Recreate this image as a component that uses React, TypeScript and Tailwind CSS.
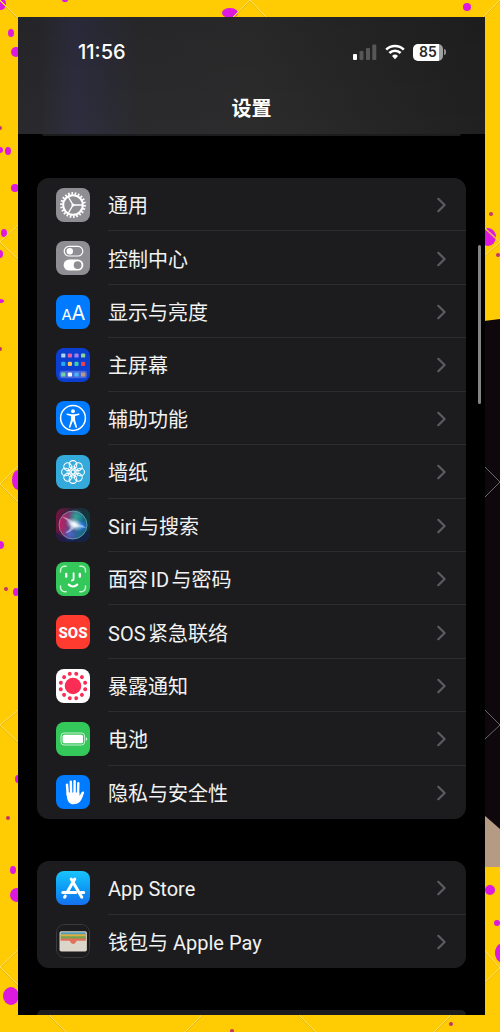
import React from 'react';

interface SettingItem {
  label: string;
  icon: React.ReactNode;
}

const IconTile: React.FC<{ children: React.ReactNode; className: string }> = ({ children, className }) => (
  <span className={`block size-[34px] shrink-0 overflow-hidden rounded-[8px] ${className}`}>
    <svg viewBox="0 0 34 34" className="size-full" aria-hidden="true">
      {children}
    </svg>
  </span>
);

const ring = (count: number, offset = 0) => Array.from({ length: count }, (_, i) => (360 / count) * i + offset);

const GeneralIcon = () => (
  <IconTile className="bg-[#8e8e93]">
    <g stroke="#fff" fill="none">
      <circle cx="17" cy="17" r="11.6" strokeWidth="2.6" pathLength="44" strokeDasharray="1 1" />
      <circle cx="17" cy="17" r="9.8" strokeWidth="2" />
      <path d="M17 17h9M17 17l-4.6-8M17 17l-4.6 8" strokeWidth="1.4" />
    </g>
    <circle cx="17" cy="17" r="1.6" fill="#fff" />
  </IconTile>
);

const ControlCenterIcon = () => (
  <IconTile className="bg-[#8e8e93]">
    <rect x="8.2" y="5.4" width="18.6" height="9.6" rx="4.8" fill="none" stroke="#fff" strokeWidth="1.2" />
    <circle cx="13.8" cy="10.2" r="3.2" fill="#fff" />
    <rect x="7.6" y="18.6" width="19.8" height="11" rx="5.5" fill="#fff" />
    <circle cx="21.6" cy="24.1" r="3.9" fill="#8e8e93" />
  </IconTile>
);

const DisplayIcon = () => (
  <IconTile className="bg-[#007aff]">
    <g fill="#fff" fontFamily="Inter, sans-serif" fontWeight="400">
      <text x="5.5" y="24.5" fontSize="15">A</text>
      <text x="15.5" y="24.5" fontSize="20">A</text>
    </g>
  </IconTile>
);

const HOME_APPS = [
  { y: 5.4, colors: ['#a9d4f0', '#ea5c9c', '#a67cf0', '#93d392'] },
  { y: 13.7, colors: ['#23a9ee', '#f3c552', '#3dcab9', '#e3434d'] },
  { y: 24.4, colors: ['#6bd6a0', '#f4f4f8', '#46b6f2', '#bb9a85'] },
];

const HomeScreenIcon = () => (
  <IconTile className="bg-[#0b3fd2]">
    <rect x="3.6" y="22.8" width="27.4" height="7.4" rx="2.4" fill="#4a68dd" />
    {HOME_APPS.map(row =>
      row.colors.map((color, i) => (
        <rect key={color} x={5.2 + i * 6.6} y={row.y} width="4.2" height="4.2" rx="1.2" fill={color} />
      ))
    )}
  </IconTile>
);

const AccessibilityIcon = () => (
  <IconTile className="bg-[#007aff]">
    <circle cx="17" cy="17" r="12.4" fill="none" stroke="#fff" strokeWidth="1.5" />
    <circle cx="17" cy="10.2" r="1.9" fill="#fff" />
    <path
      d="M11.2 12.5l4.2.8h3.2l4.2-.8c.9-.1 1.1 1.1.2 1.4l-3.900 1.200v4l1.900 6.600c.3 1-1.100 1.400-1.500.5L17.400 20.400h-.8L14.500 26.200c-.4.9-1.800.5-1.500-.5l1.900-6.600v-4L11 13.900c-.9-.3-.7-1.500.2-1.400z"
      fill="#fff"
    />
  </IconTile>
);

const WallpaperIcon = () => (
  <IconTile className="bg-[#34aadc]">
    <g fill="none" stroke="#fff" strokeWidth="1.1">
      {ring(8).map(angle => (
        <g key={angle} transform={`rotate(${angle} 17 17)`}>
          <circle cx="17" cy="9.4" r="3.8" />
          <ellipse cx="17" cy="13" rx="1.5" ry="2" strokeWidth="0.7" />
        </g>
      ))}
      <circle cx="17" cy="17" r="2" />
    </g>
  </IconTile>
);

const SiriIcon = () => (
  <IconTile className="bg-[#1b1a26]">
    <defs>
      <linearGradient id="siri-bg" x1="0" y1="0" x2="1" y2="0.2">
        <stop offset="0" stopColor="#7c1342" />
        <stop offset="0.5" stopColor="#262338" />
        <stop offset="1" stopColor="#0d3a3c" />
      </linearGradient>
      <linearGradient id="siri-orb" x1="0" y1="0.4" x2="1" y2="0.5">
        <stop offset="0" stopColor="#c8195f" />
        <stop offset="0.4" stopColor="#6b3f78" />
        <stop offset="0.75" stopColor="#1d6f92" />
        <stop offset="1" stopColor="#10606a" />
      </linearGradient>
      <radialGradient id="siri-glow">
        <stop offset="0" stopColor="#fff" />
        <stop offset="0.3" stopColor="#eef8ff" stopOpacity="0.85" />
        <stop offset="1" stopColor="#8fc8e8" stopOpacity="0" />
      </radialGradient>
      <radialGradient id="siri-blue">
        <stop offset="0" stopColor="#2f8bff" />
        <stop offset="1" stopColor="#2f5bff" stopOpacity="0" />
      </radialGradient>
      <radialGradient id="siri-green">
        <stop offset="0" stopColor="#2ac89a" stopOpacity="0.9" />
        <stop offset="1" stopColor="#2ac89a" stopOpacity="0" />
      </radialGradient>
    </defs>
    <rect width="34" height="34" fill="url(#siri-bg)" />
    <path d="M0 24Q16 40 34 20V34H0z" fill="#141b4a" opacity="0.7" />
    <circle cx="17" cy="17" r="14" fill="url(#siri-orb)" />
    <circle cx="20" cy="8.5" r="8" fill="url(#siri-green)" opacity="0.8" />
    <circle cx="14" cy="26" r="8" fill="url(#siri-blue)" opacity="0.6" />
    <circle cx="26" cy="18" r="6" fill="url(#siri-blue)" />
    <path d="M6 9c5 0 10 3 13 7 4 0 8 1 11 4-5-1-8-1-11-1-3 4-6 6-10 6 3-2 5-4 6-7-2-4-5-7-9-9z" fill="#fff" opacity="0.45" />
    <ellipse cx="18.5" cy="16.5" rx="9.5" ry="6.5" fill="url(#siri-glow)" transform="rotate(25 18.5 16.5)" />
    <circle cx="17" cy="17" r="14" fill="none" stroke="#86b8cc" strokeWidth="0.8" opacity="0.8" />
  </IconTile>
);

const FaceIdIcon = () => (
  <IconTile className="bg-[#34c759]">
    <g fill="none" stroke="#fff" strokeLinecap="round">
      <path
        d="M4.500 10V8.500a4.200 4.200 0 0 1 4.200-4.200h1.500M23.800 4.300h1.500a4.200 4.200 0 0 1 4.200 4.200V10M29.500 24v1.500a4.200 4.200 0 0 1-4.200 4.200h-1.500M10.200 29.700H8.700a4.200 4.200 0 0 1-4.200-4.200V24"
        strokeWidth="1.5"
        opacity="0.75"
      />
      <path d="M10.200 12v2.600M23.800 12v2.600" strokeWidth="2.4" />
      <path d="M17.600 11.200v5.900c0 .9-.5 1.400-1.700 1.400" strokeWidth="1.8" />
      <path d="M12.800 22.600c2.400 2.400 6 2.400 8.400 0" strokeWidth="2.200" />
    </g>
  </IconTile>
);

const SosIcon = () => (
  <IconTile className="bg-[#ff3b30]">
    <text x="17" y="22.5" textAnchor="middle" fill="#fff" fontFamily="Roboto, sans-serif" fontWeight="800" fontSize="15">
      SOS
    </text>
  </IconTile>
);

const ExposureIcon = () => (
  <IconTile className="bg-white">
    <g fill="#fb2d55">
      <circle cx="17" cy="17" r="8.3" />
      {ring(12, 15).map(angle => (
        <circle key={angle} cx="17" cy="4.4" r="2" transform={`rotate(${angle} 17 17)`} />
      ))}
    </g>
  </IconTile>
);

const BatteryIcon = () => (
  <IconTile className="bg-[#34c759]">
    <rect x="5" y="11" width="23.6" height="12" rx="3" fill="none" stroke="#fff" strokeWidth="0.9" opacity="0.8" />
    <rect x="6.6" y="12.7" width="20.4" height="8.6" rx="1.6" fill="#fff" />
    <path d="M29.900 15.200c1.800.6 1.800 3 0 3.600z" fill="#fff" opacity="0.8" />
  </IconTile>
);

const PrivacyIcon = () => (
  <IconTile className="bg-[#007aff]">
    <g stroke="#fff" strokeWidth="2.5" strokeLinecap="round">
      <path d="M11 9.800l.8 10M14.800 6.800l.3 12M18.600 6.200v12M22.300 8.300l-.3 12" />
    </g>
    <path
      d="M10.500 17.500h12.800l.2 3.500 2.100-3.700c.8-1.400 2.900-1 2.500.5-1.200 3.600-2.200 6.600-4 8.800-1.500 1.800-3.700 2.700-6.600 2.700-4.800 0-6.600-3.500-7-11.800z"
      fill="#fff"
    />
  </IconTile>
);

const AppStoreIcon = () => (
  <IconTile className="bg-linear-to-b from-[#1bc4fb] to-[#1670ee]">
    <g stroke="#fff" strokeWidth="3" strokeLinecap="round" fill="none">
      <path d="M18.800 8l-7.500 13M15.200 8l10.600 18.200M9.300 25l-.7 1.200" />
      <path d="M6.800 21.600h13M25 21.600h2.700" />
    </g>
  </IconTile>
);

const WalletIcon = () => (
  <IconTile className="bg-[#1c1c1e]">
    <rect x="0.5" y="0.5" width="33" height="33" rx="7.5" fill="none" stroke="#3a3a3c" />
    <rect x="3.5" y="7.200" width="27.400" height="20.400" rx="1.800" fill="#dcd6ca" />
    <path d="M4.600 9.400a1.200 1.200 0 0 1 1.200-1.200h22.800a1.200 1.200 0 0 1 1.200 1.200V12H4.600z" fill="#4f9dbd" />
    <path d="M4.600 10.200h25.200v3H4.600z" fill="#dfae41" />
    <path d="M4.600 12.300h25.200v3H4.600z" fill="#74a351" />
    <path d="M4.600 14.600h25.200v2.100H21.300c-.9 0-1 .6-1.500 1.600-1.100 2.200-4.100 2.200-5.200 0-.5-1-.6-1.600-1.500-1.600H4.600z" fill="#e2705b" />
  </IconTile>
);

const MAIN_ITEMS: SettingItem[] = [
  { label: '通用', icon: <GeneralIcon /> },
  { label: '控制中心', icon: <ControlCenterIcon /> },
  { label: '显示与亮度', icon: <DisplayIcon /> },
  { label: '主屏幕', icon: <HomeScreenIcon /> },
  { label: '辅助功能', icon: <AccessibilityIcon /> },
  { label: '墙纸', icon: <WallpaperIcon /> },
  { label: 'Siri与搜索', icon: <SiriIcon /> },
  { label: '面容ID与密码', icon: <FaceIdIcon /> },
  { label: 'SOS紧急联络', icon: <SosIcon /> },
  { label: '暴露通知', icon: <ExposureIcon /> },
  { label: '电池', icon: <BatteryIcon /> },
  { label: '隐私与安全性', icon: <PrivacyIcon /> },
];

const STORE_ITEMS: SettingItem[] = [
  { label: 'App Store', icon: <AppStoreIcon /> },
  { label: '钱包与 Apple Pay', icon: <WalletIcon /> },
];

const SettingRow: React.FC<{ item: SettingItem; last: boolean }> = ({ item, last }) => (
  <li className="flex min-h-[52px] flex-1">
    <a href="#" className="flex flex-1 items-stretch gap-[18px] pl-[19px]">
      <span className="flex items-center">{item.icon}</span>
      <span className={`flex flex-1 items-center justify-between pt-0.5 pr-5 ${last ? '' : 'border-b border-[#2d2d2f]'}`}>
        <span className="pt-0.5 font-['Roboto','Noto_Sans_CJK_SC',sans-serif] text-xl leading-6 text-[#f2f2f2] [text-autospace:normal]">
          {item.label}
        </span>
        <svg width="9" height="16" viewBox="0 0 9 16" fill="none" stroke="#5c5c60" strokeWidth="2.2" strokeLinecap="round" strokeLinejoin="round" aria-hidden="true">
          <path d="M1.300 1.800L7.600 8l-6.300 6.200" />
        </svg>
      </span>
    </a>
  </li>
);

const SettingGroup: React.FC<{ items: SettingItem[]; className: string }> = ({ items, className }) => (
  <ul className={`mx-[19px] flex flex-col overflow-hidden rounded-xl bg-[#1c1c1e] ${className}`}>
    {items.map((item, i) => (
      <SettingRow key={item.label} item={item} last={i === items.length - 1} />
    ))}
  </ul>
);

const StatusBar = () => (
  <div className="flex h-[70px] items-center justify-between pr-[39px] pl-[60px]">
    <span className="text-xl leading-6 font-medium">11:56</span>
    <div className="flex items-center gap-2">
      <svg width="24" height="16" viewBox="0 0 24 16" fill="#575758" aria-hidden="true">
        <rect x="0" y="10" width="4" height="6" rx="1" fill="#fff" />
        <rect x="6.5" y="7" width="4" height="9" rx="1" />
        <rect x="13" y="4" width="4" height="12" rx="1" />
        <rect x="19.3" y="0.5" width="4" height="15.5" rx="1" />
      </svg>
      <svg width="20" height="16" viewBox="0 0 20 16" fill="none" stroke="#fff" strokeWidth="2.6" aria-hidden="true">
        <path d="M1.200 5.600a12.500 12.500 0 0 1 17.600 0" />
        <path d="M4.400 9a8 8 0 0 1 11.200 0" />
        <path d="M10 15.200L7 12a4.300 4.300 0 0 1 6 0z" fill="#fff" stroke="none" />
      </svg>
      <div className="flex items-center gap-px">
        <span className="flex h-[17px] w-[30px] items-center justify-center rounded-[5px] bg-linear-to-r from-white from-87% to-[#a0a0a0] to-87% text-sm leading-4 font-semibold text-[#29292b]">
          85
        </span>
        <span className="h-[6px] w-[2px] rounded-r-full bg-[#8e8e90]"></span>
      </div>
    </div>
  </div>
);

// [x, y, rx, ry]
const SPLASHES = [
  [1, 4, 5, 6], [65, 0, 3, 2], [230, 13, 8, 5], [467, 7, 4, 4], [11, 33, 3, 4], [16, 52, 5, 5],
  [0, 150, 3, 3], [8, 151, 3, 4], [15, 188, 4, 4], [4, 233, 3, 4], [0, 254, 3, 4], [0, 301, 4, 2],
  [18, 480, 6, 10], [0, 545, 4, 4], [16, 592, 3, 4], [18, 779, 3, 4], [13, 870, 3, 4], [17, 895, 7, 7],
  [11, 996, 8, 9], [488, 237, 8, 9], [490, 890, 5, 5], [497, 923, 3, 3], [501, 953, 6, 9],
];

const SPECKS = [
  [0, 349], [6, 589], [8, 818], [491, 214], [498, 255], [451, 1024], [232, 1031], [0, 128],
];

const Backdrop = () => (
  <svg viewBox="0 0 500 1032" preserveAspectRatio="none" className="absolute inset-0 size-full" aria-hidden="true">
    <rect width="500" height="1032" fill="#ffcb03" />
    <path d="M484 321l16-2v548h-16z" fill="#0e080d" />
    <path d="M484 815l16 14v38h-16z" fill="#b59a84" />
    {SPLASHES.map(([x, y, rx, ry]) => (
      <ellipse key={`${x}-${y}`} cx={x} cy={y} rx={rx} ry={ry} fill="#dc19de" />
    ))}
    {SPECKS.map(([x, y]) => (
      <circle key={`${x}-${y}`} cx={x} cy={y} r="2" fill="#c5356a" />
    ))}
    <g fill="none" stroke="#e9b416" transform="translate(0 1)">
      <path d="M18 225L0 242l18 17M18 466L0 484l18 18M18 710L0 725l18 17M18 950L0 967l18 18" />
      <path d="M0 0l18 18M233 17L250 0l16 17M500 0l-17 17M485 228l15 14-15 13M485 951l15 17-15 14" />
      <path d="M48 1014l18 18M203 1014l-18 18M452 1014l-18 18M298 1014l18 18" />
    </g>
    <g fill="none" stroke="#ffe35c">
      <path d="M18 225L0 242l18 17M18 466L0 484l18 18M18 710L0 725l18 17M18 950L0 967l18 18" />
      <path d="M0 0l18 18M233 17L250 0l16 17M500 0l-17 17M485 228l15 14-15 13M485 951l15 17-15 14" />
      <path d="M48 1014l18 18M203 1014l-18 18M452 1014l-18 18M298 1014l18 18" />
    </g>
    <path d="M485 467l15 15-15 15M485 710l15 15-15 14" fill="none" stroke="#6a666a" />
  </svg>
);

const App: React.FC = () => (
  <div className="relative flex min-h-screen flex-col pt-[17px] pr-[15px] pb-[17px] pl-[18px] font-['Inter','Noto_Sans_CJK_SC',sans-serif] text-white">
    <Backdrop />
    <main className="relative flex flex-1 flex-col overflow-hidden bg-black">
      <header className="bg-linear-to-r from-[#29292d] via-[#2c2c2d] to-[#202021]">
        <div className="bg-linear-to-r from-transparent from-5% via-[#2e2d3f] via-12% to-transparent to-26%">
          <div className="bg-linear-to-b from-black/10 to-transparent pb-[5px]">
            <StatusBar />
            <h1 className="pt-0.5 text-center text-xl leading-10 font-semibold">设置</h1>
          </div>
        </div>
      </header>
      <div className="mx-6 h-[2px] rounded-b-full bg-[#1c1c1e]"></div>

      <SettingGroup items={MAIN_ITEMS} className="mt-[42px] flex-[12]" />
      <SettingGroup items={STORE_ITEMS} className="mt-[42px] flex-[2]" />
      <div className="mx-[19px] mt-[42px] h-[5px] rounded-t-xl bg-[#1c1c1e]"></div>

      <div className="absolute top-[228px] right-[4px] h-[159px] w-[3px] rounded-full bg-[#858585]"></div>
    </main>
  </div>
);

export default App;
